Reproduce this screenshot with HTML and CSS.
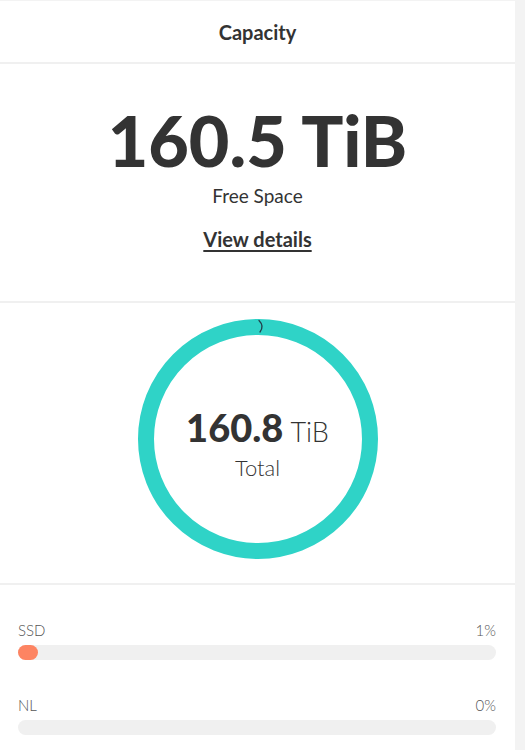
FILE: index.html
```html
<!DOCTYPE html>
<html lang="en">
<head>
  <meta charset="UTF-8" />
  <meta name="viewport" content="width=device-width, initial-scale=1.0" />
  <title>Capacity</title>
  <link rel="stylesheet" href="styles.css">
</head>
<body>

  <div class="card">
    <div class="card-header">Capacity</div>

    <div class="free-space">
      <div class="free-value">160.5 TiB</div>
      <div class="free-label">Free Space</div>
      <a class="details-link" href="#">View details</a>
    </div>

    <div class="ring-section">
      <div class="ring">
        <svg width="240" height="240" viewBox="0 0 240 240">
          <circle cx="120" cy="120" r="112" fill="none" stroke="#2fd3c7" stroke-width="16" />
          <path d="M121 1.5 Q126.5 7 122 13" fill="none" stroke="#24404c" stroke-width="1.3" stroke-linecap="round" />
        </svg>
        <div class="ring-text">
          <div class="ring-value"><strong>160.8</strong> <span>TiB</span></div>
          <div class="ring-label">Total</div>
        </div>
      </div>
    </div>

    <div class="tiers">
      <div class="tier">
        <div class="tier-row">
          <span>SSD</span>
          <span>1%</span>
        </div>
        <div class="bar"><div class="bar-fill" style="width: 20px"></div></div>
      </div>
      <div class="tier">
        <div class="tier-row">
          <span>NL</span>
          <span>0%</span>
        </div>
        <div class="bar"></div>
      </div>
    </div>
  </div>

</body>
</html>
```

FILE: styles.css
```css
body {
  font-family: Lato, "Open Sans", Arial, sans-serif;
  background-color: #f3f3f3;
  color: #333333;
  margin: 0;
}

.card {
  width: 515px;
  background-color: #ffffff;
  border-top: 1px solid #f3f3f3;
}

.card-header {
  height: 61px;
  display: flex;
  align-items: center;
  justify-content: center;
  font-size: 20px;
  font-weight: 700;
  border-bottom: 2px solid #f0f0f0;
}

.free-space {
  height: 237px;
  display: flex;
  flex-direction: column;
  align-items: center;
  border-bottom: 2px solid #f0f0f0;
}

.free-value {
  font-size: 70px;
  font-weight: 900;
  line-height: 1;
  margin-top: 41px;
}

.free-label {
  font-size: 19px;
  margin-top: 9px;
}

.details-link {
  font-size: 20px;
  font-weight: 700;
  color: #333333;
  margin-top: 20px;
  text-underline-offset: 3px;
  text-decoration-thickness: 2px;
}

.ring-section {
  height: 282px;
  display: flex;
  justify-content: center;
  padding-top: 16px;
  box-sizing: border-box;
  border-bottom: 2px solid #f0f0f0;
}

.ring {
  position: relative;
  width: 240px;
  height: 240px;
}

.ring svg {
  display: block;
}

.ring-text {
  position: absolute;
  inset: 0;
  display: flex;
  flex-direction: column;
  align-items: center;
  justify-content: center;
  padding-top: 6px;
}

.ring-value strong {
  font-size: 38px;
  font-weight: 900;
}

.ring-value span {
  font-size: 27px;
  font-weight: 300;
  margin-left: 3px;
}

.ring-label {
  font-size: 22px;
  font-weight: 300;
  margin-top: 4px;
}

.tiers {
  padding: 36px 19px 14px 18px;
}

.tier {
  margin-bottom: 36px;
}

.tier-row {
  display: flex;
  justify-content: space-between;
  font-size: 15px;
  font-weight: 300;
  color: #555555;
}

.bar {
  height: 15px;
  margin-top: 6px;
  background-color: #f0f0f0;
  border-radius: 8px;
}

.bar-fill {
  height: 100%;
  background-color: #fd8462;
  border-radius: 8px;
}
```
